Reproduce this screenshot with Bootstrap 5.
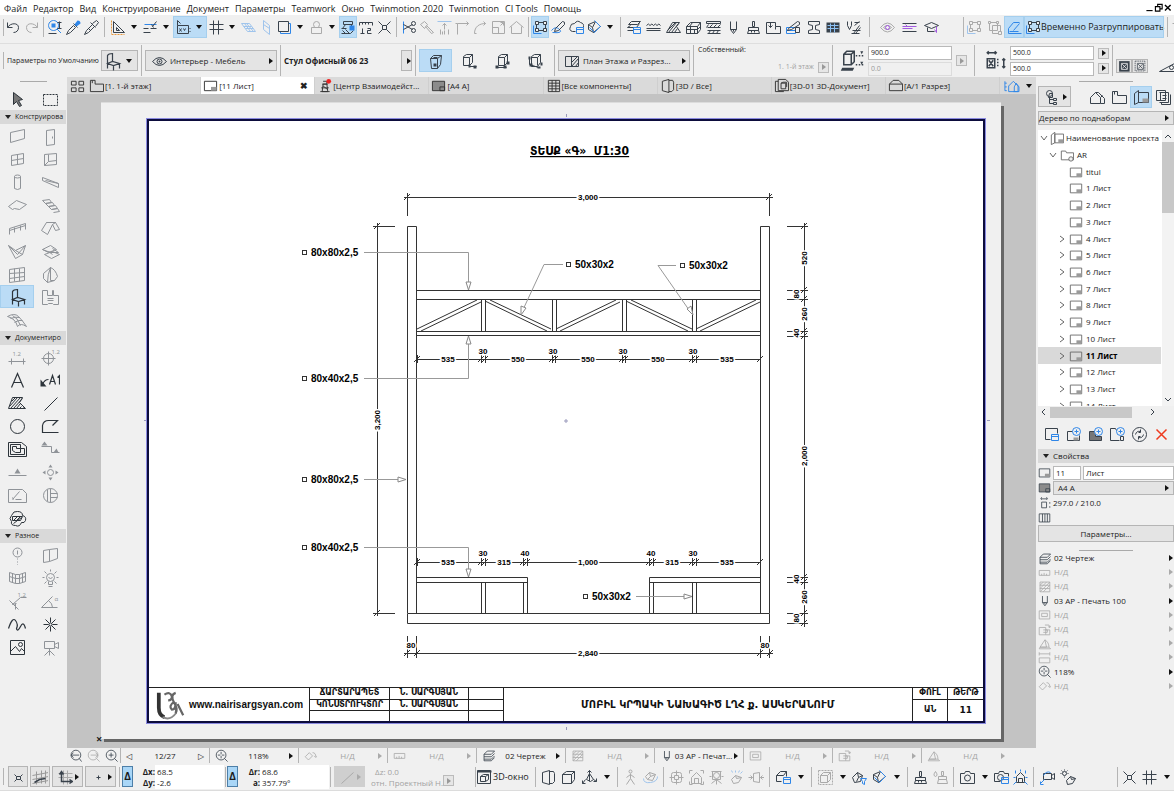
<!DOCTYPE html>
<html lang="ru">
<head>
<meta charset="utf-8">
<meta name="viewport" content="width=device-width, initial-scale=1">
<title>11 Лист</title>
<link href="https://cdn.jsdelivr.net/npm/bootstrap@5.3.0/dist/css/bootstrap.min.css" rel="stylesheet">
<style>
:root{--ui:#f0f0f0;--line:#b4b4b4;--ink:#39424c;--dim:#a2a2a2;--blue:#2f86e8;--hl:#bbdcf6}
body{font-family:"Open Sans","Noto Sans",sans-serif;font-size:8px;line-height:12px;color:#1c1c1c;background:#fff;min-height:100vh;overflow-x:hidden}
button,input{font:inherit;color:inherit}
button{background:none;border:0;padding:0;text-align:inherit}
svg.ic{width:16px;height:16px;flex:none;fill:none;stroke:currentColor;stroke-width:1;color:var(--ink)}
svg.ic .b{stroke:var(--blue)} svg.ic .bf{fill:var(--blue);stroke:none} svg.ic .f{fill:currentColor;stroke:none}
svg.ic .g{fill:#9a9a9a;stroke:none}
svg.ic .w{fill:var(--ui)} svg.ic text{stroke:none;fill:currentColor;font-size:6px} svg.ic .p{stroke:#a35be0}
.off svg.ic,svg.off{color:#aaa} .off svg.ic .b{stroke:#9fc4ec} .off{color:var(--dim)}
.appmenu{height:15px;font-size:9px;padding:0 2px 0 4px;gap:6px}
.appmenu a{color:#1c1c1c;text-decoration:none;line-height:17px;white-space:nowrap}
.win{display:flex;align-items:center}
.win svg.ic{width:9px;height:9px;color:#000}
.toolbar{height:29px;background:var(--ui);border-bottom:1px solid #dedede;overflow:hidden;padding-bottom:4px}
.infobar{height:33px;background:var(--ui);overflow:hidden;font-size:7px}
.grip{width:4px;flex:none;height:17px;border-right:1px solid var(--line)}
.tb{width:18px;height:22px;flex:none;display:flex;align-items:center;justify-content:center}
.t20{width:20px}.t22{width:22px}
.hot{background:var(--hl);outline:1px solid #a5cfee;outline-offset:-1px}
.hotpair{padding:0 1px}
.dd{width:14px;height:22px;flex:none;display:flex;align-items:center;justify-content:center}
.dd::before{content:"";border:3px solid transparent;border-top:4px solid #111;border-bottom:0}
.arr::after,.tri{content:"";flex:none;border:3px solid transparent;border-left:4px solid #111;border-right:0;margin-left:auto}
.off.arr::after{border-left-color:#aaa}
.sep{width:6px;height:20px;flex:none;display:flex;justify-content:center}
.sep::before{content:"";width:1px;background:var(--line)}
.s3{width:3px}.s9{width:9px}.s12{width:13px}.s20{width:22px;justify-content:flex-end}
.infobar .sep{height:31px;width:7px}
.boxy{border:1px solid #b5b5b5;background:#e4e4e4;height:21px;display:flex;align-items:center;flex:none}
.combo{width:132px;padding:0 3px 0 5px;gap:3px;font-size:8px}
.ungroup{height:22px;font-size:9px;width:140px;padding:0 1px}
.def{width:97px;padding-left:3px}
.chairb{width:37px}.chairb svg.ic{width:20px;height:20px}
.name{font-size:8px}
.side-b{width:11px}
.cu{width:33px;height:23px}
.own{width:132px;padding:0 0 4px 1px;white-space:nowrap}
.ib{width:32px;display:flex;justify-content:center}
.ib svg.ic{width:24px;height:24px}
.gap2{gap:2px}
.xb{width:16px;height:14px;justify-content:center}.xb svg.ic{width:12px;height:12px}
.pair{margin:0 10px 4px 0}
.field{width:84px;height:14px;border:1px solid #b9b9b9;background:#fff;padding:0 2px;display:block;border-radius:0}
.field:disabled{background:#f0f0f0;color:#999;border-color:#dcdcdc}
.mini{width:11px;height:11px;border:1px solid #bbb;background:#e6e6e6;display:flex;align-items:center;justify-content:center;flex:none}
.mini .tri{margin:0}
.mini.off .tri{border-left-color:#999}
.palette{width:67px;flex:none;background:var(--ui);overflow:hidden}
.palette .top{padding-top:5px;height:28px}
.palette .sect{font-size:7px}
.handle{height:5px;width:27px;margin:0 auto;border-bottom:1px solid #aaa}
.sect{height:14px;background:#d9d9d9;display:flex;align-items:center;white-space:nowrap;overflow:hidden;width:66px}
.sect::before{content:"";border:3px solid transparent;border-top:4px solid #222;border-bottom:0;margin:0 4px 0 5px;flex:none}
.tools{display:grid;grid-template-columns:1fr 1fr;grid-auto-rows:23px}
.tools button{display:flex;align-items:center;justify-content:center}
.tools svg.ic{width:20px;height:20px;color:#8f9398}
.tools .dk svg.ic{color:#2d343b}
.mid{min-width:0}
.tabsrow{height:17px;background:#dadada}
.tabsrow a{flex:1 1 0;min-width:0;display:flex;align-items:center;gap:1px;padding:0 2px;color:#222;text-decoration:none;border-right:1px solid #cfcfcf;white-space:nowrap}
.tabsrow a.now{background:#fff}
.tabsrow svg.ic{width:15px;height:15px;color:#333}
.tabsrow .bluei svg.ic{width:20px;color:var(--blue)}
.shut{font-size:9px}
.desk{background:#c3c3c3;padding:9px 35px 9px 34px}
.sheet{background:#f0f0f0;padding:16px 16px 16px 46px;box-shadow:3px 3px 0 #666,0 -1px 0 #dcdcdc}
.framed{background:#fff;border:2px solid #0c0c3c;outline:1px solid #8a8ae0}
.plan{display:block;width:100%;height:auto;overflow:visible;font-family:"Liberation Sans",Arial,sans-serif;font-weight:700;font-size:8px}
.plan path,.plan rect{fill:none;stroke:#333}
.plan .lead-l path{stroke:#999}
.plan .lead-l .hd{fill:#fff;stroke:#888}
.plan .marks{stroke:#99b}
.plan .dims text{text-anchor:middle;stroke:#fff;stroke-width:3px;paint-order:stroke}
.plan .tag{font-size:10px}
.plan .ttl{font:700 12px "DejaVu Sans Condensed","DejaVu Sans",sans-serif;text-decoration:underline}
.stamp{width:100%;height:34px;table-layout:fixed;border-collapse:collapse;font:700 8px/10px "DejaVu Sans","Liberation Sans",sans-serif;text-align:center;color:#111;background:#fff}
.stamp td{border:1px solid #222;padding:0;height:10px;white-space:nowrap}
.stamp td.edge{border-right:0}
.stamp .brandc{border-left:0;font:700 10px/12px "Liberation Sans",Arial,sans-serif}
.stamp .cap{font-size:10px}
.stamp .num{font-size:9px}
.stamp tr:last-child td,.stamp td[rowspan]{border-bottom:0}
.logo{height:30px}
.logo svg.ic{width:36px;height:30px}
.corner{position:absolute;left:-5px;bottom:-6px;font-size:11px;line-height:12px;font-weight:700}
.status{height:15px;background:var(--ui);overflow:hidden}
.status .cell{flex:89 1 0;min-width:0;display:flex;align-items:center;border-left:1px solid var(--line);padding:0 5px;white-space:nowrap}
.status .cell span{flex:1;text-align:center}
.status svg.ic{width:13px;height:13px}
.zooms{width:53px;flex:none}
.tailc{width:26px;flex:none}
.side{width:138px;flex:none;background:var(--ui);overflow:hidden;padding-left:2px}
.w54{width:54px}.h9{height:9px}.h14{height:14px}.h17{height:17px}.w28{width:28px}
.mt2{margin-top:2px}.mt3{margin-top:3px}
.navr{height:26px;padding-top:3px}
.navb{width:33px;padding:0 3px 0 5px}
.treewrap{margin-top:5px}
.tree{height:276px;background:#fff;overflow:hidden}
.tree ul{display:grid;grid-auto-rows:1fr;height:284px;width:123px;margin:0;padding:0;list-style:none}
.tree li{display:flex;align-items:center;padding-left:20px;gap:3px;white-space:nowrap}
.tree li.root{padding-left:2px;gap:2px}.tree li.sub{padding-left:11px}
.tree li.now{background:#d9d9d9;font-weight:700;color:#000}
.tree svg.ic{width:14px;height:14px;color:#666}
.tree svg.ic.ch{width:8px;height:8px}
.vbar{width:12px;background:#f3f3f3}
.thumb{background:#c8c8c8}
.sm.ic{width:8px;height:8px;margin:2px}
.vbar .thumb{height:71px}
.hbar{height:12px}.hbar .thumb{width:82px;height:11px;margin-right:14px}
.acts{height:31px;padding-left:2px}
.props{display:grid;grid-auto-rows:1fr;height:142px}
.props button{display:flex;align-items:center;gap:3px;padding-right:1px}
.props svg.ic,.pr svg.ic{width:13px;height:13px}
.pr{display:flex;align-items:center;gap:2px;height:15px}
.bottom{height:28px;background:var(--ui);overflow:hidden;border-bottom:1px solid #dcdcdc;margin-bottom:2px}
.bottom .boxy{justify-content:center}
.b20{width:20px}.bottom .b32{width:31px;padding:0 3px}
.boxy.b32 svg.ic{margin:auto}
.gry{background:#cfcfcf;border-color:#cfcfcf;margin-left:2px}
.delta{width:11px;height:21px;background:#a9d6f7;border:1px solid #4d7fa8;font-weight:700;font-size:10px;line-height:19px;text-align:center;flex:none}
.coord{width:91px;height:24px;background:linear-gradient(90deg,var(--ui) 22px,#fff 22px);line-height:11px;padding:1px 0;flex:none}
.coord b{display:inline-block;width:22px;text-align:right}
.zc{width:78px;padding-left:6px;line-height:11px;flex:none}
.w3d{width:56px;font-size:9px;gap:1px}
</style>
</head>
<body class="d-flex flex-column">
<nav class="appmenu d-flex">
<a href="#">Файл</a><a href="#">Редактор</a><a href="#">Вид</a><a href="#">Конструирование</a><a href="#">Документ</a><a href="#">Параметры</a><a href="#">Teamwork</a><a href="#">Окно</a><a href="#">Twinmotion 2020</a><a href="#">Twinmotion</a><a href="#">CI Tools</a><a href="#">Помощь</a>
<span class="ms-auto d-flex"><button data-i="wmin" class="win"></button><button data-i="wres" class="win"></button><button data-i="wcls" class="win"></button></span>
</nav>

<div class="toolbar d-flex align-items-center">
<span class="grip"></span><button class="tb" data-i="undo"></button><button class="tb off" data-i="redo"></button><i class="sep"></i>
<button class="tb" data-i="find"></button><button class="tb" data-i="drop"></button><button class="tb" data-i="syr"></button><i class="sep s9"></i>
<button class="tb" data-i="setsq"></button><button class="dd"></button><button class="tb" data-i="guide"></button><button class="dd"></button>
<span class="d-flex hot hotpair"><button class="tb" data-i="xy"></button><button class="dd"></button></span>
<button class="tb" data-i="hash"></button><button class="dd"></button><button class="tb off" data-i="pl1"></button><button class="tb off" data-i="pl2"></button><button class="tb" data-i="lay"></button><button class="dd"></button><button class="tb off" data-i="lock"></button><button class="dd"></button>
<button class="tb hot" data-i="grav"></button><button class="tb" data-i="rul"></button><button class="tb" data-i="xx"></button><i class="sep"></i>
<button class="tb" data-i="cut"></button><button class="tb off" data-i="axe"></button><button class="tb off" data-i="adj"></button><button class="tb off" data-i="cor"></button><button class="tb off" data-i="fil"></button><button class="tb off" data-i="rsz"></button><button class="tb off" data-i="home"></button><i class="sep"></i>
<button class="tb hot" data-i="grp"></button><button class="tb" data-i="pen"></button><button class="tb" data-i="cloud"></button><button class="tb" data-i="cube2"></button><button class="dd"></button><i class="sep"></i>
<button class="tb t20" data-i="lays"></button><button class="tb t20" data-i="wav"></button><button class="tb t20" data-i="hat"></button><button class="tb t20" data-i="brick"></button><button class="tb t20" data-i="comp"></button><button class="tb t20" data-i="nib"></button><button class="tb t20" data-i="brush"></button><button class="tb t20" data-i="zone"></button><button class="tb t20" data-i="penb"></button><button class="tb t20" data-i="beam"></button><button class="tb t20" data-i="tabl"></button><button class="tb t20" data-i="vee"></button><i class="sep s12"></i>
<button class="tb t22 off" data-i="eyep"></button><button class="tb t22" data-i="linp"></button><button class="tb t22" data-i="cap"></button><i class="sep s20"></i>
<button class="tb t20 off" data-i="grp"></button><button class="tb t20 off" data-i="grp2"></button>
<button class="tb t20 hot" data-i="poly"></button>
<button class="d-flex align-items-center hot text-nowrap ungroup"><i data-i="grp" class="d-flex"></i>Временно Разгруппировать</button><i class="sep"></i><button class="tb off" data-i="cor"></button>
</div>

<div class="infobar d-flex align-items-center">
<span class="grip"></span><span class="text-nowrap def">Параметры по Умолчанию</span>
<button class="boxy chairb" data-i="chairt"><i class="dd"></i></button><i class="sep"></i>
<button class="boxy combo arr" data-i="eye">Интерьер - Мебель</button><i class="sep"></i>
<b class="flex-grow-1 text-nowrap name">Стул Офисный 06 23</b><button class="boxy arr side-b"></button><i class="sep"></i>
<button class="tb cu hot" data-i="cuA"></button><button class="tb cu" data-i="cuB"></button><button class="tb cu" data-i="cuC"></button><button class="tb cu" data-i="cuD"></button><i class="sep"></i>
<button class="boxy combo arr" data-i="planv">План Этажа и Разрез...</button><i class="sep"></i>
<div class="own d-flex flex-column align-self-stretch justify-content-between"><span>Собственный:</span><span class="d-flex justify-content-end align-items-center gap-1 off">1. 1-й этаж<button class="mini off"><i class="tri"></i></button></span></div><i class="sep"></i>
<span class="ib" data-i="hgt"></span>
<div class="d-grid gap2"><input class="field" aria-label="Высота" value="900.0"><input class="field" aria-label="Отметка" value="0.0" disabled></div>
<button class="mini off ms-1 me-1"><i class="tri"></i></button><i class="sep"></i>
<span class="ib" data-i="dimx"></span>
<div class="d-grid gap2"><input class="field" aria-label="Ширина" value="500.0"><input class="field" aria-label="Длина" value="500.0"></div>
<div class="d-grid gap-1 ms-1"><button class="mini"><i class="tri"></i></button><button class="mini"><i class="tri"></i></button></div><i class="sep"></i>
<span class="d-flex align-self-end pair"><button class="boxy xb" data-i="bx1"></button><button class="boxy xb" data-i="bx2"></button></span><span class="align-self-end d-flex mb-1" data-i="ang"></span>
</div>

<main class="d-flex flex-grow-1">
<aside class="palette">
<div class="handle"></div>
<div class="tools top"><button class="dk" data-i="arrow"></button><button class="dk" data-i="marq"></button></div>
<div class="sect">Конструирова</div>
<div class="tools">
<button data-i="wall"></button><button data-i="door"></button><button data-i="wind"></button><button data-i="sky"></button><button data-i="colm"></button><button data-i="beamt"></button><button data-i="slab"></button><button data-i="stair"></button><button data-i="rail"></button><button data-i="roof"></button><button data-i="shell"></button><button data-i="mesh0"></button><button data-i="curt"></button><button data-i="morph"></button><button class="dk hot" data-i="chairt"></button><button data-i="zonet"></button><button data-i="mesh"></button>
</div>
<div class="sect">Документиро</div>
<div class="tools">
<button data-i="dimt"></button><button data-i="lvl"></button><button class="dk" data-i="txt"></button><button class="dk" data-i="lab"></button><button class="dk" data-i="fillt"></button><button class="dk" data-i="line"></button><button class="dk" data-i="circ"></button><button class="dk" data-i="pline"></button><button class="dk" data-i="drw"></button><button data-i="sect"></button><button data-i="elev"></button><button data-i="inte"></button><button data-i="work"></button><button data-i="det"></button><button class="dk" data-i="chg"></button>
</div>
<div class="sect">Разное</div>
<div class="tools">
<button data-i="gel"></button><button data-i="cwin"></button><button data-i="cgrid"></button><button data-i="lamp"></button><button data-i="rad"></button><button data-i="angt"></button><button class="dk" data-i="spl"></button><button class="dk" data-i="hot"></button><button class="dk" data-i="fig"></button><button data-i="cam"></button>
</div>
</aside>

<section class="flex-grow-1 d-flex flex-column mid">
<nav class="tabsrow d-flex">
<button class="tb t20 h-100" data-i="four"></button>
<a href="#" data-i="fol">[1. 1-й этаж]</a><a href="#" class="now" data-i="lay1">[11 Лист]<b class="ms-auto me-1 shut">✖</b></a><a href="#" data-i="tower">[Центр Взаимодейст...</a><a href="#" data-i="layd">[A4 A]</a><a href="#" data-i="grid9">[Все компоненты]</a><a href="#" data-i="box3">[3D / Все]</a><a href="#" data-i="doc3">[3D-01 3D-Документ]</a><a href="#" data-i="hse">[A/1 Разрез]</a>
<button class="tb t22 h-100 bluei" data-i="hblue"></button><button class="dd h-100"></button>
</nav>
<div class="desk flex-grow-1">
<div class="sheet position-relative">
<div class="framed">
<svg class="plan" viewBox="149 121 834 566" id="plan"></svg>
<table class="stamp">
<colgroup><col style="width:19.3%"><col style="width:9.5%"><col style="width:9.5%"><col style="width:4.2%"><col><col style="width:4.3%"><col style="width:4.2%"></colgroup>
<tr><td rowspan="3" class="brandc"><span class="d-flex align-items-center justify-content-between ps-1 pe-2"><i data-i="logo" class="d-flex logo"></i>www.nairisargsyan.com</span></td><td>ՃԱՐՏԱՐԱՊԵՏ</td><td>Ն. ՍԱՐԳՍՅԱՆ</td><td></td><td rowspan="3" class="cap">ՄՈԲԻԼ ԿՐՊԱԿԻ ՆԱԽԱԳԻԾ ԼՂՀ ք. ԱՍԿԵՐԱՆՈՒՄ</td><td>ՓՈՒԼ</td><td class="edge">ԹԵՐԹ</td></tr>
<tr><td>ԿՈՆՍՏՐՈՒԿՏՈՐ</td><td>Ն. ՍԱՐԳՍՅԱՆ</td><td></td><td rowspan="2">ԱՆ</td><td rowspan="2" class="edge num">11</td></tr>
<tr><td></td><td></td><td></td></tr>
</table>
</div>
<span class="corner">×</span>
</div>
</div>
<div class="status d-flex">
<span class="d-flex align-items-center justify-content-around zooms"><button data-i="zprev" class="d-flex"></button><button data-i="znext" class="d-flex off"></button><button data-i="zin" class="d-flex"></button></span>
<div class="cell"><button>◁</button><span>12/27</span><button>▷</button></div>
<button class="cell arr" data-i="zfit"><span>118%</span></button>
<button class="cell arr off" data-i="rot"><span>Н/Д</span></button>
<button class="cell arr off" data-i="scl"><span>Н/Д</span></button>
<button class="cell arr" data-i="layr"><span>02 Чертеж</span></button>
<button class="cell arr off" data-i="hatb"><span>Н/Д</span></button>
<button class="cell arr" data-i="nib"><span>03 АР - Печат...</span></button>
<button class="cell arr off" data-i="frm"><span>Н/Д</span></button>
<button class="cell arr off" data-i="ovr"><span>Н/Д</span></button>
<button class="cell arr off" data-i="ren"><span>Н/Д</span></button>
<span class="tailc"></span>
</div>
</section>

<aside class="side">
<div class="handle w54"></div>
<div class="d-flex align-items-center navr">
<button class="boxy navb arr" data-i="map"></button>
<span class="d-flex ms-auto"><button class="tb t22" data-i="hse2"></button><button class="tb t22" data-i="fol"></button><button class="tb t22 hot" data-i="book"></button><button class="tb t22" data-i="pub"></button></span>
</div>
<button class="boxy arr w-100 h14 pe-1 mt3">Дерево по поднаборам</button>
<div class="d-flex treewrap">
<div class="tree flex-grow-1"><ul id="tree"></ul></div>
<div class="vbar d-flex flex-column align-items-center"><svg class="ic sm" viewBox="0 0 8 8"><path d="M1 6l3-3 3 3"/></svg><div class="thumb w-100"></div><svg class="ic sm mt-auto" viewBox="0 0 8 8"><path d="M1 2l3 3 3-3"/></svg></div>
</div>
<div class="d-flex align-items-center hbar"><svg class="ic sm" viewBox="0 0 8 8"><path d="M5 1L2 4l3 3"/></svg><div class="thumb"></div><svg class="ic sm" viewBox="0 0 8 8"><path d="M3 1l3 3-3 3"/></svg></div>
<div class="d-flex align-items-center acts"><button class="tb t22" data-i="a1"></button><button class="tb t22" data-i="a2"></button><button class="tb t22" data-i="a3"></button><button class="tb t22" data-i="a4"></button><button class="tb t22" data-i="a5"></button><button class="tb t22" data-i="a6"></button></div>
<div class="sect w-100">Свойства</div>
<div class="pr mt2"><i data-i="lay1" class="d-flex"></i><input class="field w28" aria-label="Номер" value="11"><input class="field flex-grow-1" aria-label="Имя" value="Лист"></div>
<div class="pr"><i data-i="layd" class="d-flex"></i><button class="boxy arr flex-grow-1 h14 ps-1 pe-1">A4 A</button></div>
<div class="pr"><i data-i="siz" class="d-flex"></i>297.0 / 210.0</div>
<div class="pr"><i data-i="colz" class="d-flex"></i></div>
<button class="boxy w-100 justify-content-center h17">Параметры...</button>
<div class="handle w54 h9"></div>
<div class="props">
<button class="arr" data-i="layr">02 Чертеж</button><button class="arr off" data-i="scl">Н/Д</button><button class="arr off" data-i="hatb">Н/Д</button><button class="arr" data-i="nib">03 АР - Печать 100</button><button class="arr off" data-i="frm">Н/Д</button><button class="arr off" data-i="ovr">Н/Д</button><button class="arr off" data-i="ren">Н/Д</button><button class="arr off" data-i="dm">Н/Д</button><button class="arr" data-i="zfit">118%</button><button class="arr off" data-i="rot">Н/Д</button>
</div>
</aside>
</main>

<footer class="bottom d-flex align-items-center">
<span class="grip me-1"></span>
<div class="d-flex gap2"><button class="boxy b20" data-i="xs"></button><button class="boxy b20" data-i="gridm"></button><button class="boxy b32 arr" data-i="axg"></button><button class="boxy b32 arr" data-i="plus"></button></div><i class="sep"></i>
<button class="delta">Δ</button><div class="coord"><div><b>Δx:</b> 68.5</div><div><b>Δy:</b> -2.6</div></div><i class="sep s3"></i>
<button class="delta">Δ</button><div class="coord"><div><b>Δr:</b> 68.6</div><div><b>a:</b> 357.79°</div></div><i class="sep s3"></i>
<button class="boxy b32 arr off gry" data-i="diag"></button>
<div class="zc off"><div class="ps-1">Δz: 0.0</div><div class="text-nowrap">отн. Проектный Н...</div></div><button class="mini off align-self-end mb-1"><i class="tri"></i></button><i class="sep s20"></i>
<button class="d-flex align-items-center text-nowrap w3d" data-i="w3"> 3D-окно</button><i class="sep"></i>
<button class="tb t20" data-i="box3"></button><button class="tb t20" data-i="cube"></button><button class="tb t22" data-i="orb"></button><button class="dd"></button><i class="sep"></i>
<button class="tb t20 off" data-i="walk"></button><button class="tb t20 off" data-i="orbit"></button><i class="sep"></i>
<button class="tb t20 off" data-i="tgt"></button><button class="tb t20 off" data-i="hfit"></button><button class="tb t20 off" data-i="camv"></button><button class="tb t20 off" data-i="sun"></button><button class="tb t20 off" data-i="sect3"></button><i class="sep"></i>
<button class="tb t22" data-i="cubb"></button><button class="dd"></button><i class="sep"></i>
<button class="tb t22 off" data-i="cubm"></button><button class="dd"></button><button class="tb" data-i="cubf"></button><button class="tb t22" data-i="cube2"></button><button class="dd"></button><i class="sep"></i>
<button class="tb t20" data-i="brush"></button><button class="tb t20 off" data-i="brush2"></button><i class="sep"></i>
<button class="tb t22" data-i="photo"></button><button class="dd"></button><button class="tb" data-i="photob"></button><button class="tb t20" data-i="hfitb"></button><i class="sep"></i>
<button class="tb t22" data-i="vid"></button><button class="tb t20" data-i="sunb"></button>
<span class="ms-auto d-flex align-items-center"><i class="sep"></i><button class="tb" data-i="xx"></button><button class="tb t22" data-i="hash"></button><button class="dd"></button></span>
</footer>

<script src="https://cdn.jsdelivr.net/npm/bootstrap@5.3.0/dist/js/bootstrap.bundle.min.js"></script>
<script>
const p=(d,c='')=>`<path class="${c}" d="${d}"/>`;
const cube=p('M3 6l3-3h7v7l-3 3H3zM3 6h7v7M10 6l3-3');
const brush='M7 2h2v5H7zM3 8h10v3H3zM2 14l1-3h10l1 3zM6 11v2M9 11v2';
const I={
undo:p('M2 3v5h5M2 8c3-5 11-5 11 0 0 3-2 5-5 5'),redo:p('M14 3v5H9M14 8C11 3 3 3 3 8c0 3 2 5 5 5'),
find:p('M6 1a5 5 0 1 0 .1 0M9.500 9.500l4 4','b')+p('M4 4h4v4H4z','bf')+p('M12 2v7M10 3h4M10 9h4M1 14h8'),
drop:p('M1 15l2-4 5-5 2 2-5 5zM8 4l4 4')+p('M9 5l3-4q3 0 3 3l-4 3z','bf'),syr:p('M1 15l2-4 6-6 2 2-6 6zM7 3l5 5M9 4l4-3 2 2-3 4M5 9l2 2'),
setsq:p('M3 2v11h11zM6 8v3h3z')+`<path d="M1 1v13M1 15h13" stroke="#e8973a" stroke-dasharray="2 1"/>`,
guide:p('M2 5h12','b')+p('M1 9h5M8 9h6M1 13h7M10 7l4-5M9 5l2 3'),
xy:p('M2 6h11v8H2zM4 9l2 3M6 9l-2 3M8 9l1 2 1-2M2 6V1l3 3M14 12h1M14 9h1'),
hash:p('M5 1v14M10 1v14M1 5h14M1 10h14'),pl1:p('M1 4h8l6 8H7zM4 4l6 8M6 4l7 8M3 7h8M5 9h8','b'),pl2:p('M5 1l6 5v9L5 10zM5 5l6 4','b'),
lay:p('M4 4h10v10H4z','b')+p('M2 2h10v10H2z','w'),lock:p('M3 8h10v6H3zM6 8L5 5a3 3 0 0 1 6 0L10 8'),
grav:p('M3 2h9v3H3zM5 5l-3 4M10 5l3 3M1 9h5M1 14h9l3-3M2 11l3 3M5 10l4 4')+p('M9 6h5v5H9z','bf'),rul:p('M1 6V3h13v3M4 3v2M7 3v2M10 3v2M4 9v5M2 14h4M9 9h3v2H9v3h4'),
xx:p('M2 2l4 4M14 2l-4 4M2 14l4-4M14 14l-4-4M6 6h4v4H6z'),xs:p('M4 5l2 2M12 5l-2 2M4 12l2-2M12 12l-2-2M6 7h4v3H6z'),
cut:p('M3 2v12','b')+p('M3 5l9 5M3 10l9-5')+'<circle cx="13" cy="4" r="2"/><circle cx="13" cy="11" r="2"/>',axe:p('M2 5l4-3 3 3-3 4zM8 6l7 7-2 1-6-7'),
adj:p('M1 2h14','b')+p('M8 4v6M6 6l2-2 2 2M4 10v5M8 11v4M12 10v5M6 12v3'),cor:p('M3 15V4h11M12 2l2 2-2 2M3 4H1'),fil:p('M2 14C2 7 7 4 13 4M11 2l2 2-2 2M2 14h2'),
rsz:p('M2 2h12v12H2zM2 8h6v6M10 6l3-3M10 3h3v3'),home:p('M1 8l7-6 7 6M3 7v7h10V7'),
grp:p('M4 3h9v8H4z')+p('M3 2h3v3H3zM11 2h3v3h-3zM3 9h3v3H3zM11 9h3v3h-3z','w')+p('M1 6v8h8','b'),grp2:p('M3 3h8v8H3zM6 6h8v8H6z')+p('M2 2h2v2H2zM10 2h2v2h-2zM12 12h3v3h-3z','w'),
pen:p('M1 11q4-5 8-1t-7 3','b')+p('M5 9l7-7q3 0 2 3l-6 6-4 1z'),cloud:p('M7 12H4Q0 11 2 7q0-3 4-3 3-4 6-1 4 1 3 5')+p('M8 8h7v6H8zM8 10h7','b'),
cube2:p('M2 5l7-3 5 5-7 6-5-3zM2 5l4 3 1 5M6 8l3-6')+p('M8 1l6 6-6 6-5-5','b'),
lays:p('M3 5l3-3h9l-3 3zM2 8l3-2M2 8h9l3-4M2 11h6')+p('M8 8h7v6H8zM8 10h7','b'),
wav:p('M1 6q2-3 3.500 0 2-3 3.500 0 2-3 3.500 0 2-3 3.500 0')+p('M1 9h14M1 11h14'),
hat:p('M1 13L7 3h7l-3 4 4 6zM3 13L11 3M6 13l7-9M9 13l3-4M2 11l8-8'),
brick:p('M1 7l4-4h10v7l-3 4H1zM1 7h11v7M12 7l3-4M1 10h11M5 7v3M9 10v4M5 10v4M7 3L4 7M12 10l3-3'),
comp:p('M1 2h14v2H1z')+p('M2 8h13M2 11h13M2 14h13M3 5L1 8M7 5L4 8M11 5L8 8M15 5l-3 3M5 11l-2 3M9 11l-2 3M13 11l-2 3'),
nib:p('M5 2v8l3 4 3-4V2M8 10v2M5 10h6'),brush:p(brush),zone:p('M1 3h9v4h5v7H1zM5 3v5M3 6l2 2 2-2M10 7v3'),
penb:p('M1 8h9v6H1zM1 11h9','b')+p('M3 9l9-7q3 0 2 3l-8 5-4 1zM10 8h4v5h-4z'),
beam:p('M3 2h11v3l-4 1v4l4 1v3H3v-3l4-1V6L3 5z'),tabl:p('M1 3h13v10H1z','f')+'<path d="M2 6h11M2 9h11M5 4v9M9 4v9" stroke="#8cc0f2"/>',
vee:p('M2 2v4l2 4 2-4V2M9 3l5 0M9 6l5-4M8 14l6-8M10 14l5-6M7 11h8M6 14h8'),
eyep:p('M1 8q7-9 14 0-7 9-14 0M4 8q4-4 8 0-4 4-8 0')+'<circle class="p" cx="8" cy="8" r="2"/>',linp:p('M1 4h14M1 12h14')+p('M1 7h14M1 9h10M4 5l2 2','p'),cap:p('M1 6l7-3 7 3-7 3zM4 8v4h7')+p('M13 7v6M11 10l2 3','p'),
poly:p('M2 14h13M2 14V9l5-6h6M7 11l6-7M3 12h9','b'),
eye:p('M1 8q7-8 14 0-7 8-14 0')+'<circle cx="8" cy="8" r="2.500"/><circle class="f" cx="8" cy="8" r="1"/>',
cuA:p('M2 5l3-3h8l-1 9-3 4H3zM2 5h7v10M9 5l4-3M5 4h4','g0')+p('M5 10h3v3H5z','f'),cuB:p('M2 3l3-2h6v8l-3 3H2zM2 4h6v8M8 4l3-3M8 13h7')+p('M12 12h3v3h-3zM7 11h2v3H7z','f'),
cuC:p('M4 3l3-2h6v8l-3 3H4zM4 4h6v8M10 4l3-3M2 14h10')+p('M1 12h3v3H1zM9 12h3v3H9zM12 8h3v3h-3z','f'),cuD:p('M4 3l3-2h6v8l-3 4H4zM4 4h6v8M10 4l3-3M2 4v7l9 3')+p('M1 3h2v3H1zM2 10h3v3H2zM10 13h3v2h-3zM13 9h2v3h-2z','f'),
planv:p('M1 3h13v10H1zM7 3v10M7 9l6-6M7 13l7-8M11 13l3-4'),
hgt:p('M2 3l2-2h5v7l-2 2H2zM2 3h5v7M7 3l2-2')+`<path d="M10 4h5M10 10h5" stroke-dasharray="1 1"/>`+p('M1 12h8l-1 2H0zM13 1h2l-1 2zM13 8h2l-1 2z','f'),
dimx:p('M3 6h5v6H3zM4 7l3 4M7 7l-3 4M3 2h6M4 1L3 2l1 1M8 1l1 1-1 1M14 6v6M13 7l1-1 1 1M13 11l1 1 1-1')+`<path d="M10 6v6" stroke-dasharray="1 1"/>`,
bx1:'<rect class="f" x="1" y="1" width="14" height="14"/><path stroke="#fff" d="M4 4h8v8H4zM5 5l6 6M11 5l-6 6"/>',bx2:'<rect x="1" y="1" width="13" height="13" stroke-dasharray="2 1"/>'+p('M4 4h8v8H4zM5 5l6 6M11 5l-6 6'),
ang:p('M1 14h15M1 14L16 6')+'<circle cx="13" cy="10" r="2"/>',
four:p('M1 3h5v4H1zM9 3h5v4H9zM1 10h5v4H1zM9 10h5v4H9z'),fol:p('M1 14V2h5v4h9v8z')+p('M3 2v3'),lay1:p('M1 3h13v10H1z')+p('M8 9h6v4H8z','g'),layd:'<path d="M1 3h13v10H1z" fill="#8b8b8b"/>'+p('M9 9h5v4H9z'),
tower:p('M5 14l1-8h4l1 8zM3 14h10M5 6h6M6 3h4v3M4 10h8M6 8l5 4')+'<circle cx="12" cy="3" r="2.500" fill="#e22" stroke="none"/>',grid9:p('M2 2h12v12H2zM6 2v12M10 2v12M2 5h12M2 8h12M2 11h12'),
box3:p('M2 3l7-2v14l-7-2zM9 2h4l1 2v8l-2 2H9'),doc3:p('M4 1h8l3 3v9H4zM1 3h3M1 3v11h9M7 5h5v6H7zM7 5l2-1h4v5'),hse:p('M1 6l4-4h6l4 4v7H1zM1 6h14'),
hblue:p('M1 3v10M1 5h2M1 9h2M1 13h2M5 14V8l5-5 5 5v6zM11 14V9l2-4 3 4v5h-6'),
wmin:p('M2 12h11v2H2z','f'),wres:'<path stroke-width="2" d="M2 6h8v8H2zM6 5V2h8v8h-3"/>',wcls:'<path stroke-width="2.500" d="M3 3l10 10M13 3L3 13"/>',
map:'<circle cx="5" cy="4" r="3"/>'+p('M5 4h3v4H4zM5 8v6h4M5 10h4M9 9h3v2H9zM9 13h3v2H9z'),
hse2:p('M1 14V8l5-5 5 5v6zM6 3h3l6 6v5h-4M11 8l2-2'),book:p('M1 4l4-3v12l-4 2zM5 3h10v10H5z')+p('M9 9h6v4H9z','g'),pub:p('M1 1h9v10H1zM4 3h9v10H4M5 3v8M6 13v2h9V5M7 6h4M7 9h4'),
foli:p('M1 3h5l1 2h8v8H1z')+'<circle class="w" cx="12" cy="12" r="2.500"/>',
a1:p('M2 2h12v5M2 2v11h5')+p('M8 8h7v6H8zM8 10h7','b'),a2:p('M2 14V5h5M2 14h12v-5')+p('M8 11h5v3H8z','g')+'<circle class="b" cx="11" cy="5" r="4"/>'+p('M11 3v4M9 5h4','b'),
a3:'<path d="M2 5h6v5h6v4H2z" fill="#777"/><circle class="b w" cx="11" cy="5" r="4"/>'+p('M11 3v4M9 5h4','b'),a4:p('M1 14V2h5l1 2M1 14h9M11 10h3v4h-3z')+'<circle class="b" cx="11" cy="5" r="4"/>'+p('M11 3v4M9 5h4','b'),
a5:'<circle cx="8" cy="8" r="7"/>'+p('M4 8q1-4 5-3M9 3v3H7M12 8q-1 4-5 3M7 13v-3h2'),a6:'<path stroke="#ee3a1e" stroke-width="1.500" d="M3 3l10 10M13 3L3 13"/>',
siz:p('M4 7h6v7H4zM3 3h8M4 1L3 3l1 1M10 1l1 2-1 1M14 7v2M14 12v2'),colz:p('M1 3h13v10H1zM5 3v10M8 3v10M11 3v10'),
layr:p('M2 6l4-4h9l-4 4zM2 9h9l4-4M2 12h9l4-4M2 6v8M2 14h9l4-4'),scl:p('M1 5h13v6H1zM4 11V9M7 11V8M10 11V9'),hatb:p('M2 2h12v12H2zM2 6h12M2 10h12M6 2L2 6M10 2L6 6M14 2l-4 4M6 6l-4 4M10 6l-4 4M14 6l-4 4M6 10l-4 4M10 10l-4 4'),
frm:p('M1 3h13v10H1zM4 6h7v4H4z'),ovr:p('M1 5h8v9H1zM9 8h5v6H9M6 8h5v3H6M8 2h5l1 3M12 4l2 1 1-2'),ren:p('M2 12L8 3l2 9zM8 3q5 3 5 9l2 2H1l1-2h11'),dm:p('M1 3h13M1 1v4M14 1v4M1 8h13v6H1z'),
zfit:'<circle cx="7" cy="7" r="6"/>'+p('M11 11l4 4M7 3v3M7 8v3M3 7h3M8 7h3'),rot:p('M1 9l5-5 4 4-5 5zM10 4q4 0 4 5M12 8l2 2 2-2'),
zprev:'<circle cx="8" cy="7" r="6"/>'+p('M12 11l3 4M12 7H3M5 4L2 7l3 3'),znext:'<circle cx="7" cy="7" r="6"/>'+p('M11 11l4 4M4 7h9M10 4l3 3-3 3'),zin:'<circle cx="7" cy="7" r="6"/>'+p('M11 11l4 4M4 7h6M7 4v6'),
gridm:'<path stroke="#999" d="M0 6l16-3M0 10l16-3M0 14l16-3M4 2v13M9 1v13M13 1v13"/><path stroke-width="1.500" d="M2 13l5-3 6-1"/>',axg:'<path stroke="#aaa" d="M1 4h14M1 8h14M6 1v14M10 1v14"/>'+'<path stroke-width="1.500" d="M4 3v9h10M2 5l2-3 2 3M12 10l3 2-3 2"/>',plus:p('M8 6v4M6 8h4'),diag:p('M2 14L14 3'),
w3:p('M1 1h13v13H1z')+p('M1 1h14v2H1z','f')+p('M4 7l3-2h5v5l-3 2H4zM4 7h5v5M9 7l3-2'),cube:p('M2 5l4-3h8v8l-3 4H2zM2 5h9v9M11 5l3-3'),
orb:p('M5 10l3-6 4 6-3 2zM8 4v8M8 1v3M6 3l2-2 2 2M4 10l-3 4M1 11v3h3M12 10l3 2M15 9v3h-3'),walk:'<circle cx="8" cy="2" r="1.500"/>'+p('M8 4v5l-4 6M8 9l4 6M4 8l4-3 4 3'),
orbit:p('M3 7l4-4 6 2-3 6-5-1zM7 3l1 4 5-2M8 7l-3 3')+p('M1 9q0 5 7 4t7-6','b'),tgt:'<rect x="3" y="3" width="10" height="10" rx="2"/>'+p('M8 1v5M8 10v5M1 8h5M10 8h5M6 6h4v4H6z'),
hfit:p('M1 4V1h3M12 1h3v3M1 12v3h3M15 12v3h-3M3 8l5-5 5 5v6H3zM6 14V9h4v5'),camv:'<circle cx="8" cy="6" r="3"/>'+p('M3 2h10M4 2v8h8V2M8 10v5M8 10l-5 4M8 10l5 4M1 7h2M13 7h2'),
sun:p('M3 10l4-4 6 2-3 5-5 1zM7 6l1 3 5-1')+p('M3 1l1 2M7 1v2M11 1l-1 2M14 2l-2 2','b'),sect3:p('M0 8h4M12 8h4M5 4l6-1v10l-6-1zM2 6l2 2-2 2M14 6l-2 2 2 2'),
cubb:p('M1 6l4-4h6v5M1 6h7M1 6v6h5M8 6l3-4')+p('M8 8h7v6H8zM8 10h7','b'),cubm:'<rect x="1" y="1" width="14" height="14" stroke-dasharray="2 1"/>'+cube,
cubf:p('M1 8l5-5 5 3-2 6-6 1zM6 3l1 5 4-2M7 8l-2 4')+p('M9 9h6l-2 3v3l-2-1v-2z','b'),brush2:p('M9 2h2v4H9zM6 7h8v3H6zM5 14l1-4h8l1 4zM3 2Q0 6 3 7q3-1 0-5'),
photo:p('M1 4h4l1-2h4l1 2h4v10H1z')+'<circle cx="8" cy="8.500" r="3"/>',photob:p('M7 12H1V4h4l1-2h4l1 2h4v3')+'<circle cx="7" cy="8" r="3"/>'+p('M8 8h7v6H8zM8 10h7','b'),
hfitb:p('M4 7l4-4 4 4v6H4zM6 13V9h4v4')+p('M3 1v3M13 1v3M8 0v2M1 15l3-3M15 15l-3-3M1 8h2M13 8h2','b'),vid:p('M4 4h8v6H4zM12 6l3-2v6l-3-2')+p('M4 6Q7 1 11 3M5 10l-4 4M1 12v3h3','b'),
sunb:'<circle cx="4" cy="4" r="2"/>'+p('M4 0v1M4 7v1M0 4h1M7 4h1M1 1l1 1M7 1L6 2M6 11l4-4 5 2-3 5-5 1zM10 7l1 3 4-1'),
logo:'<path stroke="#333" stroke-width="2" d="M1 1v8q0 4 3 5"/><path stroke="#888" d="M3 14q4 2 7-2 1-2 0-4"/><path stroke="#666" stroke-width="1.200" d="M10 12q1-3-1-6-2-4 1-5M9 6q-3 2-1 4 2 0 2-4M11 7l3 6M4 2q3-2 4 1 0 2-2 2"/>'};
/* palette glyphs, 20-unit grid */
const P={
arrow:'<path d="M6 3l9 7-4 1 3 5-2 1-3-5-3 3z" fill="#777"/>',marq:'<rect x="3" y="5" width="14" height="11" stroke-dasharray="2 1"/>',
wall:p('M3 6l14-3v9L3 16z'),door:p('M6 4l8-1v15l-8 1zM12 10v2'),wind:p('M4 6l12-2v10L4 16zM4 11l12-2M10 5v10'),sky:p('M4 5l12-1v11L4 16zM8 5v7l8-1M8 12l-4 4'),
colm:p('M7 4v12q3 2 6 0V4')+'<ellipse cx="10" cy="4" rx="3" ry="1.500"/>',beamt:p('M2 5l16 6v4L2 8zM18 11l-13-3'),slab:p('M1 11l8-6 10 4-7 5-5-1-2 1z'),
stair:p('M2 5l7-1 2 3-6 1zM5 8l7-1 2 3-6 1zM8 11l7-1 2 3-6 1zM11 14l6-1 2 3-6 1'),rail:p('M2 16v-6l16-5v6M2 12l16-5M7 14V9M13 12V7'),
roof:p('M1 12l5-8h9l4 7-4 1-3-6-5 10zM6 4h9M12 6l3-2'),shell:p('M1 4l7 5 10-5-3 9-7 4zM8 9l7 4M1 4l9 9 8-9'),mesh0:p('M2 8l8-4 6 4-8 3zM2 8l8 3 8 0-6-4M4 13l8-3 7 3-8 4zM8 10l4 3'),
curt:p('M2 5l15-2v13L2 18zM2 9l15-1M2 14l15-2M7 4v13M12 4v13'),morph:p('M3 14V9l7-6q5 2 7 9l-3 4-7 2zM10 3q-3 7-3 15M10 3v13l4 0'),
chairt:'<path stroke-width="1.200" d="M5 12V4q1-2 5-2v8M5 12l5-2 7 2-6 2zM5 12v5M11 14v5M17 12v5"/>',zonet:p('M2 3h5v5h5V3h1v5h5v9h-5l-1-1H8l-1 1H2zM7 11h6M7 13h6'),
mesh:p('M0 6q7-4 11 0t8 10q-6-4-9 0Q8 8 0 6M5 5q5 2 8 10M3 8q5-2 9-1M7 12q4-3 8-2'),
dimt:p('M1 14h17M4 11v6M16 11v6')+'<text x="5" y="8">1.2</text>',lvl:'<circle cx="8" cy="11" r="5"/>'+p('M8 4v14M1 11h14')+'<text x="11" y="6">1.2</text>',
txt:'<path stroke-width="1.200" d="M4 17L10 3l6 14M6 12h8"/>',lab:'<path stroke-width="1.200" d="M2 14q2-5 6-5M9 14l3-9 3 9M10 11h4M17 7l2-2v9"/>'+p('M0 9v7h6z','f'),
fillt:p('M1 15l4-11h10l-3 5 6 6zM3 15L13 4M6 15L15 5M9 15l4-5M12 15l2-2M2 13l8-9M4 8l4-4M15 15l1-1'),line:'<path d="M4 17L17 4"/>',circ:'<circle cx="10" cy="10" r="7"/>',pline:'<path stroke-width="1.200" d="M18 16H2V9q1-5 6-5h9l-5 5"/>',
drw:'<path d="M1 3h13l5 4v10H1zM3 5h10v4h4v6H3z"/><path d="M5 7h4v2h4v4H8l-3-2z"/>',sect:p('M1 7h10v6h8')+p('M4 2l3 4H1zM16 9l2 4h-5z','f'),elev:p('M1 13h18')+p('M10 6l3 5H7z','f'),inte:'<circle cx="10" cy="10" r="3"/>'+p('M10 2l2 3H8zM10 18l2-3H8zM2 10l3-2v4zM18 10l-3-2v4z','f'),
work:p('M1 4h14l4 4v9H1zM5 14l7-8M8 14l6 0M6 14l-1-2'),det:'<circle cx="10" cy="10" r="7"/>'+p('M7 4v12M10 3v14M10 8h7M10 12h7'),chg:'<path d="M4 7q2-5 6-4 5 0 5 4 4 1 3 5-1 3-4 2-2 5-6 3-5 0-4-4-3-3 0-6zM5 8h10l-2 4H5zM6 15l8-6M6 12l4-4M9 12l4-4"/>',
gel:'<circle cx="10" cy="7" r="4.500"/>'+p('M10 5v4M10 13v1M10 16v1M10 19v1'),cwin:p('M3 5l6-1v12l-6 1zM9 4l8-1v10l-8 3'),cgrid:p('M2 4l6 2h4l6-2v9l-6 2H8l-6-2zM2 8l6 2h4l6-2M8 6v9M12 6v9M5 5v9M15 5v9'),
lamp:'<circle cx="10" cy="9" r="4"/>'+p('M8 13v3h4v-3M8 18h4M10 1v2M2 9h2M16 9h2M4 3l2 2M16 3l-2 2M4 15l2-2M16 15l-2-2M8 9l2 1 2-1'),rad:p('M2 9l9 9M5 13l8-7h6M5 13l4-1M8 18v-6')+'<text x="10" y="5">1.2</text>',angt:p('M1 16L12 5M1 16h16M8 9q4 3 4 7M11 6l-3 3')+'<text x="14" y="9">α</text>',
spl:'<path stroke-width="1.200" d="M1 14q4-12 7-8t1 8q1 4 4-2t5 2"/>',hot:'<path d="M10 3v5M10 12v5M3 10h5M12 10h5M5 5l4 4M15 5l-4 4M5 15l4-4M15 15l-4-4"/><circle cx="10" cy="10" r="1.500"/>',fig:'<path d="M3 3h14v14H3zM3 14l5-5 4 5 2-3 3 3"/><circle cx="13" cy="7" r="2"/>',cam:p('M4 4h10v7H4zM14 7l4-2v6l-4-2M9 11v7M9 13l-5 5M9 13l5 5')};
/* the half-unit origin puts whole-number strokes on pixel centres */
const draw=k=>{const big=P[k],s=big?20:16;return `<svg class="ic" aria-hidden="true" viewBox="-0.5 -0.5 ${s} ${s}">${big||I[k]}</svg>`};
document.querySelectorAll('[data-i]').forEach(el=>{
  el.insertAdjacentHTML('afterbegin',draw(el.dataset.i));
  if(el.tagName==='BUTTON'&&!el.textContent.trim())el.setAttribute('aria-label',el.dataset.i);
});
/* project tree */
const ch=open=>`<svg class="ic ch" viewBox="0 0 8 8"><path d="${open===1?'M1 2l3 4 3-4':open===2?'M2 1l4 3-4 3':''}"/></svg>`;
let t=`<li class="root">${ch(1)}${draw('book')}Наименование проекта</li><li class="sub">${ch(1)}${draw('foli')}AR</li><li>${ch(0)}${draw('lay1')}titul</li>`;
for(let n=1;n<15;n++)t+=`<li class="${n===11?'now':''}">${ch(n>3?2:0)}${draw('lay1')}${n} Лист</li>`;
document.getElementById('tree').innerHTML=t;
/* elevation drawing */
let g='<text class="ttl" x="530" y="155" xml:space="preserve">ՏԵՍՔ «Գ»  Մ1:30</text>';
g+=p('M407.500 613V226.500h9V613M760.500 613V226.500h9V613M407.500 613.500h362v10h-362zM417 290.500h343M417 299.500h343M417 331.500h343M417 335.500h343');
for(const x of [481,552,622,692])g+=p(`M${x}.500 300v31M${x+4}.500 300v31`);
for(const x of [417,556,696])g+=p(`M${x} 329l60-29M${x+4} 331l60-29`);
for(const x of [485,626])g+=p(`M${x+5} 300l61 29M${x} 301l62 30`);
g+=p('M417 577.500h110.500V613M417 582.500h106.500V613M481.500 583v30M485.500 583v30M760 577.500H649.500V613M760 582.500H653.500V613M692.500 583v30M696.500 583v30M649 582.500h6M523 582.500h5');
const tick=(x,y)=>`M${x-3} ${y+3}l6-6`;
let d='M404 197.500h369M407.500 193v23M769.500 193v23M377.500 223v393M373 226.500h22M373 613.500h22M804.500 223v404M417 359.500h343M417 562.500h343M404 653.500h369M407.500 636v22M416.500 636v22M760.500 636v22M769.500 636v22';
for(const y of [226,290,299,331,336,577,582,613,623])d+=`M787 ${y}.500h21`+tick(804,y);
for(const x of [417,481,485,552,555,622,625,692,696,760])d+=`M${x}.500 355v8`+tick(x,359);
for(const x of [417,481,485,523,527,649,653,692,696,760])d+=`M${x}.500 558v8`+tick(x,562);
d+=tick(407,197)+tick(769,197)+tick(377,226)+tick(377,613)+tick(407,653)+tick(417,653)+tick(760,653)+tick(770,653);
g+='<g class="dims">'+p(d);
const T=(x,y,s)=>`<text x="${x}" y="${y+3}">${s}</text>`,R=(x,y,s)=>`<text transform="translate(${x+3} ${y}) rotate(-90)">${s}</text>`;
g+=T(588,197,'3,000')+T(588,653,'2,840')+T(411,645,'80')+T(765,645,'80');
[[448,'535'],[518,'550'],[588,'550'],[658,'550'],[727,'535']].forEach(a=>g+=T(a[0],359,a[1]));
[483,553,623,693].forEach(x=>g+=T(x,351,'30'));
[[448,'535'],[504,'315'],[588,'1,000'],[672,'315'],[727,'535']].forEach(a=>g+=T(a[0],562,a[1]));
[[483,'30'],[525,'40'],[651,'40'],[693,'30']].forEach(a=>g+=T(a[0],553,a[1]));
g+=R(377,420,'3,200')+R(804,258,'520')+R(796,294,'80')+R(804,314,'260')+R(796,333,'40')+R(804,456,'2,000')+R(796,579,'40')+R(804,597,'260')+R(796,618,'80')+'</g>';
g+='<g class="lead-l">'+p('M364 252.500h104.500v30M364 378.500h104.500V344M364 479.500h34M364 547.500h104.500v22M636 596.500h48M563 264.500h-19l-20 43M676 265.500h-18l30 43')
+p('M466 282h5l-2.500 8zM466 344h5l-2.500-8zM398 477v5l8-2.500zM466 569h5l-2.500 8zM684 594v5l8-2.500zM521 306l5 2-5 7zM687 309l4-3 2 9z','hd')+'</g>';
[[302,252,'80x80x2,5'],[302,378,'80x40x2,5'],[302,479,'80x80x2,5'],[302,547,'80x40x2,5'],[566,264,'50x30x2'],[680,265,'50x30x2'],[583,596,'50x30x2']].forEach(([x,y,s])=>g+=`<rect x="${x}.500" y="${y-2}.500" width="4" height="4"/><text class="tag" x="${x+9}" y="${y+4}">${s}</text>`);
g+='<g class="marks"><path style="stroke:inherit" d="M566 419v4M564 421h4M566.500 114v3M144 420.500h3M566.500 727v3M987 420.500h3"/></g>';
document.getElementById('plan').innerHTML=g;
</script>
</body>
</html>
